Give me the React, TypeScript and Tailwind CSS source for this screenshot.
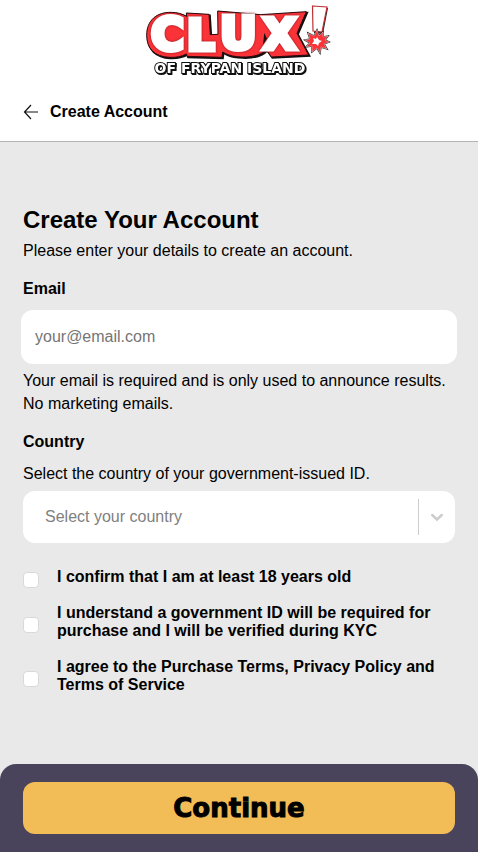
import { useState } from "react";

const countries = ["Australia", "Canada", "France", "Germany", "Japan", "United Kingdom", "United States"];

const confirmations = [
  { id: "age", text: "I confirm that I am at least 18 years old" },
  { id: "kyc", text: "I understand a government ID will be required for purchase and I will be verified during KYC" },
  { id: "terms", text: "I agree to the Purchase Terms, Privacy Policy and Terms of Service" },
];

// Red plate behind the word mark, reused in black as its drop shadow.
const plate =
  "M8 100 C8 55 38 30 82 31 C100 31 115 36 128 43 L127 33 L195 37 L199 98 L222 97 L221 27 L350 38 L487 29 L459 94 L494 159 L382 165 L367 143 C352 160 320 168 280 164 C260 162 246 157 236 150 L234 166 L129 163 L127 156 C112 164 96 167 76 166 C32 164 8 140 8 100 Z";

const burst =
  "M178 30 L180 36 L184 32 L184 37 L189 36 L186 40 L190 42 L185 44 L188 49 L182 47 L181 53 L178 48 L173 52 L173 46 L167 47 L171 43 L166 40 L171 39 L169 33 L175 36 Z";

function Logo() {
  return (
    <svg
      viewBox="0 0 200 80"
      className="h-20 w-[200px]"
      role="img"
      aria-label="Clux of Frypan Island"
      fontFamily="'DejaVu Sans', sans-serif"
      fontWeight="700"
    >
      <g transform="translate(5 2) scale(0.3333)" strokeLinejoin="miter">
        <path d={plate} transform="translate(3 3)" fill="#111" stroke="#111" strokeWidth="5" />
        <path d={plate} fill="#fa3338" stroke="#2a0a0c" strokeWidth="3" />
        <path d="M361 92 L369 110 L357 129 Z" fill="#111" />
      </g>
      <g
        fill="#fff"
        stroke="#fff"
        strokeWidth="5"
        strokeMiterlimit="3"
        className="[filter:drop-shadow(0_0_1px_#8d1519)]"
      >
        <text x="12" y="50" fontSize="45">C</text>
        <text x="48" y="50" fontSize="43">L</text>
        <text x="81" y="49" fontSize="45">U</text>
        <text x="124" y="49" fontSize="43">X</text>
      </g>
      <path d="M175 7 L189 8 L184 34 L175 33 Z" fill="#222" />
      <path d="M173.500 6 L188 7 L183 32 L174 31 Z" fill="#fff" stroke="#bd3135" strokeWidth="1.200" />
      <path d={burst} fill="#222" stroke="#222" strokeWidth="1.500" />
      <path d={burst} fill="#fa3338" stroke="#fff" strokeWidth="0.400" />
      <path d="M178 37 L180 40 L183 41 L180 43 L179 46 L177 44 L173 44 L175 41 L174 38 L177 39 Z" fill="#fff" />
      <text
        x="91"
        y="73"
        textAnchor="middle"
        fontSize="14"
        fill="#fff"
        stroke="#111"
        strokeWidth="2"
        paintOrder="stroke"
        className="[filter:drop-shadow(1px_1px_0_#111)]"
      >
        OF FRYPAN ISLAND
      </text>
    </svg>
  );
}

export default function App() {
  const [country, setCountry] = useState("");

  return (
    <form
      className="flex min-h-screen flex-col bg-[#e9e9e9] font-['Liberation_Sans',Arial,sans-serif] text-base text-black"
      onSubmit={(event) => event.preventDefault()}
    >
      <header className="border-b border-[#b4b4b4] bg-white">
        <div className="flex justify-center">
          <Logo />
        </div>
        <div className="flex h-[61px] items-center gap-[11px] px-[23px] pt-[2px]">
          <button type="button" aria-label="Go back">
            <svg viewBox="4 4 16 16" className="size-4" fill="none" stroke="#111" strokeWidth="1.200">
              <path d="M12 5 L5.500 12 L12 19 M5.500 12 H19" />
            </svg>
          </button>
          <span className="font-bold">Create Account</span>
        </div>
      </header>

      <main className="flex flex-col px-[23px] pt-[62px] pb-8">
        <h1 className="text-2xl leading-8 font-bold">Create Your Account</h1>
        <p className="mt-[3px] leading-[23px]">Please enter your details to create an account.</p>

        <label htmlFor="email" className="mt-[15px] leading-[23px] font-bold">
          Email
        </label>
        <input
          id="email"
          type="email"
          placeholder="your@email.com"
          aria-describedby="email-help"
          className="-mx-[2px] mt-[10px] h-[54px] rounded-xl bg-white px-[14px] outline-none placeholder:text-[#757575]"
        />
        <p id="email-help" className="mt-[5px] leading-[23px]">
          Your email is required and is only used to announce results. No marketing emails.
        </p>

        <label htmlFor="country" className="mt-[15px] leading-[23px] font-bold">
          Country
        </label>
        <p id="country-help" className="mt-[9px] leading-[23px]">
          Select the country of your government-issued ID.
        </p>
        <div className="relative mt-[6px]">
          <select
            id="country"
            value={country}
            onChange={(event) => setCountry(event.target.value)}
            aria-describedby="country-help"
            className="h-[52px] w-full appearance-none rounded-xl bg-white pr-12 pl-[22px] text-[#808080] outline-none"
          >
            <option value="" disabled>
              Select your country
            </option>
            {countries.map((name) => (
              <option key={name}>{name}</option>
            ))}
          </select>
          <div className="pointer-events-none absolute inset-y-2 right-0 flex w-[37px] items-center justify-center border-l border-[#ccc]">
            <svg viewBox="0 0 20 20" className="size-5" fill="none" stroke="#ccc" strokeWidth="2.400">
              <path d="M5.200 8 L10 12.500 L14.800 8" strokeLinecap="round" />
            </svg>
          </div>
        </div>

        <div className="mt-[25px] flex flex-col gap-[18px]">
          {confirmations.map(({ id, text }) => (
            <div key={id} className="flex items-center gap-[18px]">
              <input
                id={id}
                type="checkbox"
                className="mt-[3px] -mb-[3px] size-4 shrink-0 appearance-none rounded border border-[#d9d9d9] bg-white checked:bg-[#49445c]"
              />
              <label htmlFor={id} className="leading-[18px] font-bold">
                {text}
              </label>
            </div>
          ))}
        </div>
      </main>

      <footer className="mt-auto rounded-t-2xl bg-[#49445c] px-[23px] py-[18px]">
        <button
          type="submit"
          className="h-[52px] w-full rounded-xl bg-[#f2bd57] font-['DejaVu_Sans',sans-serif] text-[26px] leading-7 font-bold [-webkit-text-stroke:1px_black]"
        >
          Continue
        </button>
      </footer>
    </form>
  );
}
